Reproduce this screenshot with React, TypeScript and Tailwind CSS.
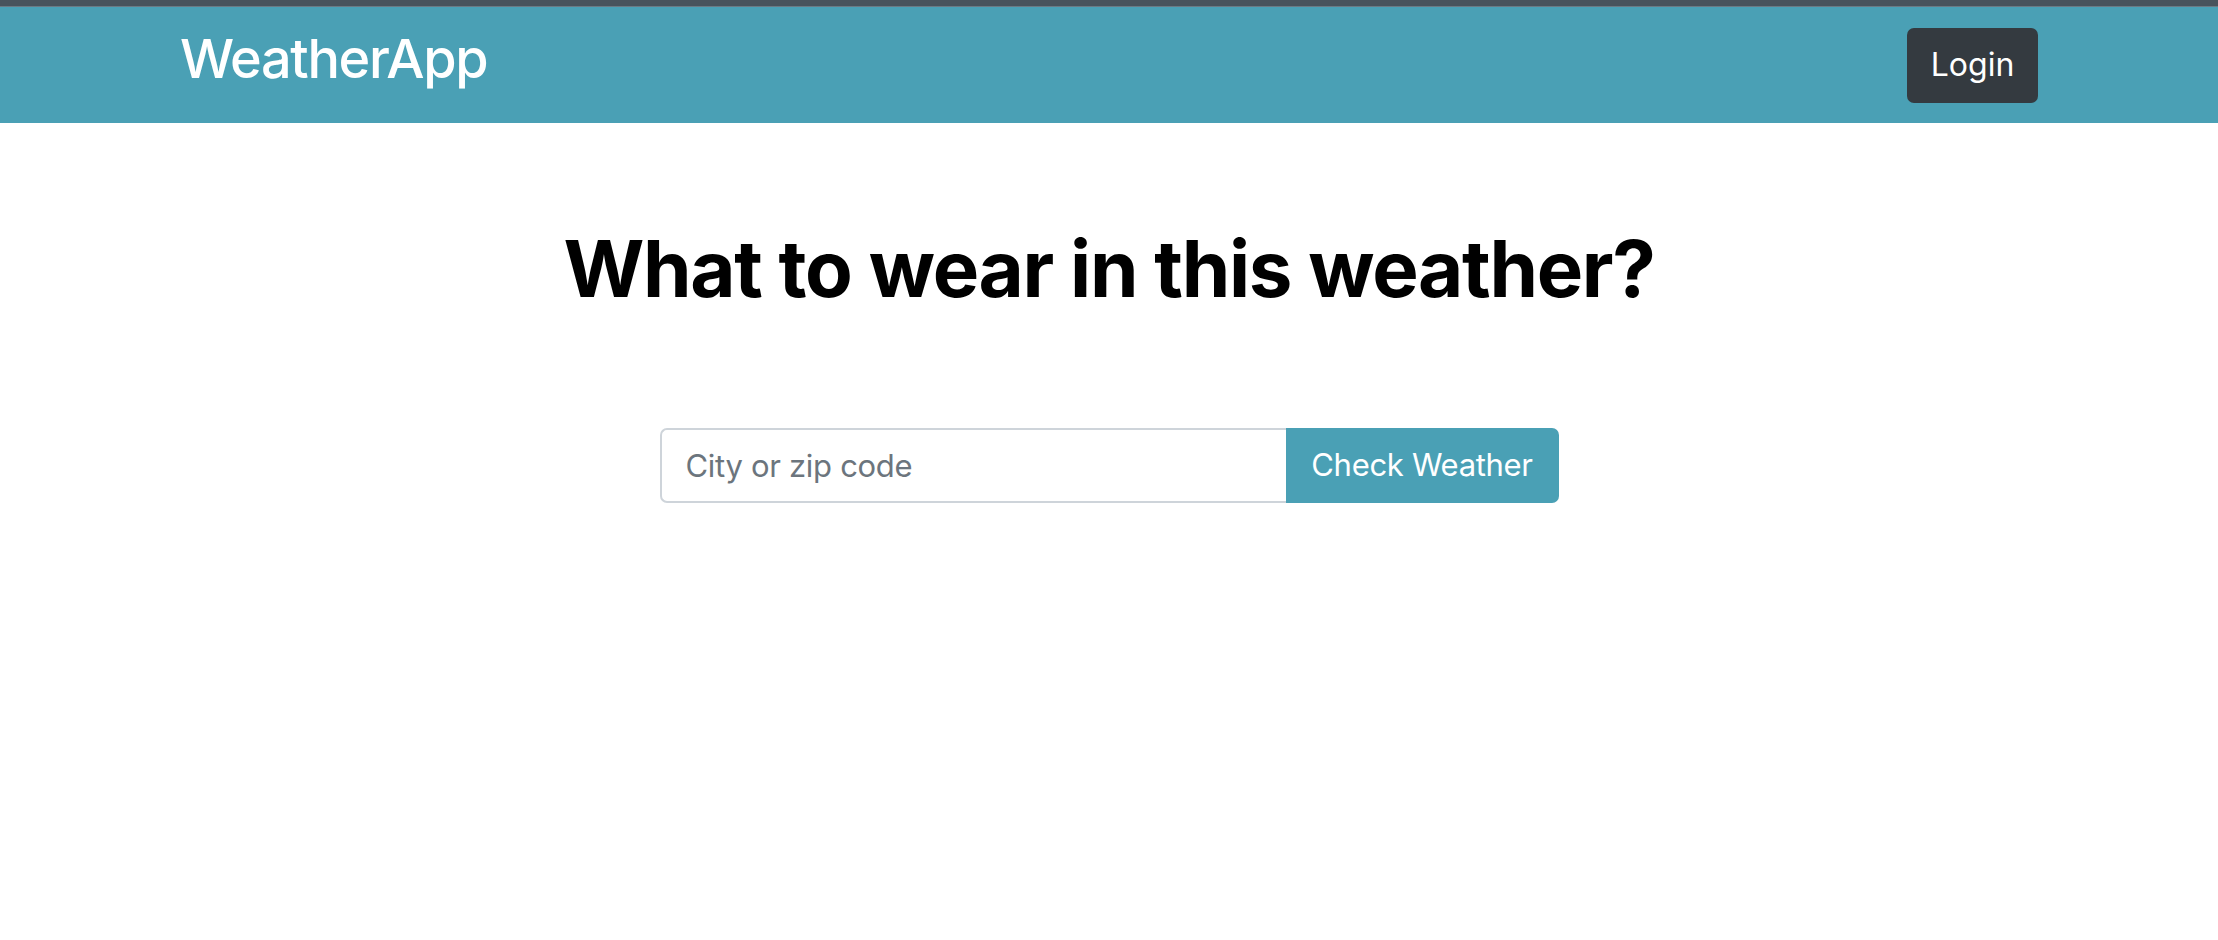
import React from "react";

export default function App() {
  return (
    <div className="min-h-[940px] bg-white" style={{ fontFamily: "Inter, 'Liberation Sans', sans-serif" }}>
      <div className="h-[6px] bg-[#48535c]" />
      <div className="h-[1px] bg-[#6b7a84]" />
      <header className="h-[116px] bg-[#4aa0b5]">
        <div className="mx-auto flex h-full w-[1858px] items-center justify-between">
          <a className="-mt-[12px] text-[54px] font-medium leading-none tracking-tight text-white">WeatherApp</a>
          <button className="h-[75px] w-[131px] rounded-[7px] bg-[#343a40] text-[32px] text-white">Login</button>
        </div>
      </header>
      <main className="flex flex-col items-center">
        <h1 className="mt-[107px] text-[78px] font-bold leading-none tracking-[-0.017em] text-black">What to wear in this weather?</h1>
        <div className="mt-[120px] flex h-[75px] w-[899px]">
          <input
            placeholder="City or zip code"
            className="h-full flex-1 rounded-l-[7px] border-2 border-r-0 border-[#ced4da] bg-white px-[24px] text-[31px] tracking-[-0.01em] text-[#495057] outline-none placeholder:text-[#6c757d]"
          />
          <button className="h-full w-[273px] rounded-r-[7px] bg-[#4aa0b5] text-[31px] tracking-[-0.01em] text-white">Check Weather</button>
        </div>
      </main>
    </div>
  );
}
